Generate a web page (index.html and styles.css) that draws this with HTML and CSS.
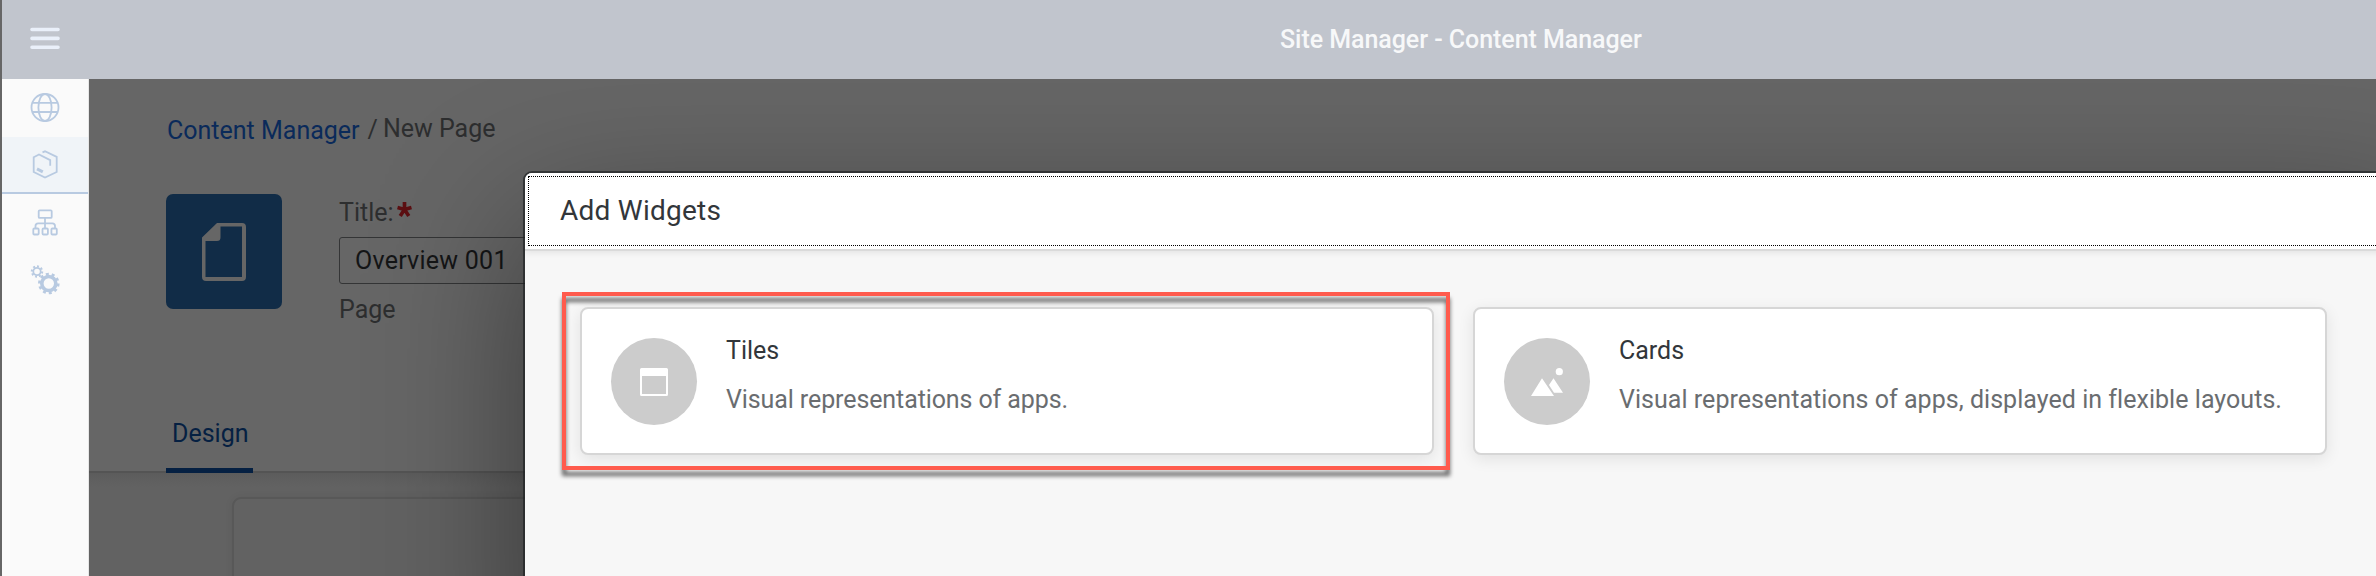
FILE: index.html
```html
<!DOCTYPE html>
<html lang="en">
<head>
<meta charset="utf-8">
<title>Site Manager - Content Manager</title>
<link rel="stylesheet" href="styles.css">
</head>
<body>
<div class="app">
  <header class="shell">
    <svg class="menu" width="30" height="24" viewBox="0 0 30 24"><path d="M2 3.500H28M2 12.400H28M2 21.300H28"/></svg>
    <h1 class="shell-title"><span>Site Manager - Content Manager</span></h1>
  </header>
  <div class="body">
    <nav class="side">
      <a class="side-item"><svg width="30" height="30" viewBox="0 0 30 30"><circle cx="15" cy="14.500" r="13.500"/><ellipse cx="15" cy="14.500" rx="6.600" ry="13.500"/><path d="M2.500 9.900H27.500M2.500 19H27.500"/></svg></a>
      <a class="side-item selected"><svg width="30" height="30" viewBox="0 0 30 30"><path d="M12.500 2.300L15 1.300L26.700 6.900V22L15 27.500L3.700 22V7.200L9 4.400L20.200 10.100V15.800"/><path class="mark" d="M7 18.900L12.800 21.900"/></svg></a>
      <a class="side-item"><svg width="30" height="30" viewBox="0 0 30 30"><rect x="8.700" y="2.300" width="13" height="7.600" rx="1"/><path d="M15 10V20.500M5.500 20.500V18Q5.500 15.300 8.200 15.300H22.300Q25 15.300 25 18V20.500"/><g class="leaf"><rect x="3.300" y="20.500" width="5.400" height="6" rx="1"/><rect x="12.500" y="20.500" width="5.400" height="6" rx="1"/><rect x="21.400" y="20.500" width="5.400" height="6" rx="1"/></g></svg></a>
      <a class="side-item"><svg width="30" height="30" viewBox="0 0 30 30"><circle cx="7" cy="6.500" r="3.700"/><circle class="teeth small" cx="7" cy="6.500" r="5.200" pathLength="80"/><circle class="big" cx="18.800" cy="18.500" r="7"/><circle class="teeth" cx="18.800" cy="18.500" r="9.300" pathLength="100"/></svg></a>
    </nav>
    <main class="page">
      <div class="crumbs"><span class="crumb-link">Content Manager</span><span class="slash">/</span><span class="crumb-current">New Page</span></div>
      <div class="summary">
        <div class="avatar"><svg width="44" height="58" viewBox="0 0 44 58"><path class="doc" fill-rule="evenodd" d="M15 0H40Q44 0 44 4V54Q44 58 40 58H4Q0 58 0 54V14.500ZM18.500 3.500V14.500Q18.500 18 15 18H3.500V54H40V3.500Z"/></svg></div>
        <div class="fields">
          <div class="label">Title:<svg class="star" width="15" height="15" viewBox="0 0 14 14"><path d="M7 0V7M0.500 5.200L7 7M13.500 5.200L7 7M3 13L7 7M11 13L7 7"/></svg></div>
          <div class="input">Overview 001</div>
          <div class="kind">Page</div>
        </div>
      </div>
      <div class="tabs"><div class="tab"><span>Design</span></div></div>
      <div class="canvas"><div class="section"></div></div>
    </main>
  </div>
  <section class="dialog">
    <div class="dialog-head"><h2>Add Widgets</h2></div>
    <div class="dialog-body">
      <div class="card">
        <div class="disc"><svg width="28" height="28" viewBox="0 0 28 28"><path fill-rule="evenodd" d="M1.500 0H26.500Q28 0 28 1.500V26.500Q28 28 26.500 28H1.500Q0 28 0 26.500V1.500Q0 0 1.500 0ZM2 8V26H26V8Z"/></svg></div>
        <div class="copy"><h3>Tiles</h3><p class="short">Visual representations of apps.</p></div>
        <div class="highlight"></div>
      </div>
      <div class="card">
        <div class="disc"><svg width="32" height="28" viewBox="0 0 32 28"><path d="M0 28L11 10.300L23 28ZM18 17L22.500 10.300L32 24.800H23Z"/><circle cx="28.300" cy="3.700" r="3.600"/></svg></div>
        <div class="copy"><h3>Cards</h3><p class="long">Visual representations of apps, displayed in flexible layouts.</p></div>
      </div>
    </div>
  </section>
</div>
</body>
</html>
```
FILE: styles.css
```css
* { box-sizing: border-box; }
body { margin: 0; overflow: hidden; }
h1, h2, h3, p { margin: 0; font-weight: 400; }
svg { display: block; }
.app {
  position: relative;
  width: 2376px;
  height: 576px;
  overflow: hidden;
  padding-left: 2px;
  background: #666;
  font: 400 25px/30px Roboto, sans-serif;
  display: flex;
  flex-direction: column;
}
.shell {
  position: relative;
  z-index: 2;
  flex: none;
  height: 79px;
  background: #c1c5cd;
  display: flex;
  align-items: center;
  padding-left: 28px;
}
.menu { fill: none; stroke: #eaf0fa; stroke-width: 3.6; stroke-linecap: round; margin-bottom: 3px; }
.shell-title { flex: 1; padding-left: 1220px; font-size: 25px; font-weight: 500; letter-spacing: -0.05px; color: #f7f8f9; white-space: nowrap; }
.body { flex: 1; min-height: 0; display: flex; }
.side {
  position: relative;
  z-index: 2;
  width: 87px;
  background: #fafafa;
  border-right: 1px solid #e6e6e6;
  display: flex;
  flex-direction: column;
}
.side-item { flex: none; height: 57px; display: flex; align-items: center; justify-content: center; }
.side-item:first-child { height: 58px; }
.side-item svg { fill: none; stroke: #b8cae1; stroke-width: 1.8; }
.side-item.selected { background: #f0f4f8; border-bottom: 2px solid #b8cae1; }
.side-item .leaf { fill: #fafafa; }
.side-item .mark { stroke-width: 3; }
.side-item .big { stroke-width: 3.6; }
.side-item .teeth { stroke-width: 3; stroke-dasharray: 5 5; }
.side-item .small { stroke-width: 2; }
.page { flex: 1; min-height: 0; display: flex; flex-direction: column; color: #2d2e2f; }
.page > * { flex: none; }
.crumbs { height: 115px; padding: 35px 0 0 78px; display: flex; }
.crumb-link { color: #0a2a5a; padding-top: 2px; }
.slash { padding: 1px 5px 0 8px; }
.summary { height: 198px; padding-left: 77px; display: flex; gap: 57px; }
.avatar { width: 116px; height: 115px; border-radius: 7px; background: #112c47; display: flex; align-items: center; justify-content: center; }
.doc { fill: #666; }
.fields { flex: 1; }
.label { height: 43px; padding-top: 4px; display: flex; gap: 3px; }
.star { margin-top: 4px; fill: none; stroke: #5c0f12; stroke-width: 3.4; }
.input { height: 47px; border: 1px solid #343536; border-radius: 3px; padding: 8px 15px; letter-spacing: 0.25px; color: #141516; }
.kind { padding-top: 11px; }
.tabs { height: 81px; border-bottom: 2px solid #545454; padding-left: 77px; }
.tab { width: 87px; height: 81px; color: #052042; padding: 27px 0 0 6px; border-radius: 3px 3px 0 0; background: linear-gradient(#052042, #052042) bottom / 100% 5px no-repeat; }
.page > .canvas { flex: 1; padding: 24px 0 0 143px; background: linear-gradient(#5c5c5c, #626262 14px); }
.section { height: 100px; border: 2px solid #585858; border-radius: 9px; background: #626262; box-shadow: 0 0 8px rgba(0,0,0,.06); }
.dialog {
  position: absolute;
  left: 525px;
  top: 173px;
  width: 1900px;
  height: 500px;
  background: #f7f7f7;
  border-radius: 7px 0 0 0;
  box-shadow: 0 0 0 2px rgba(24,26,28,.6), 0 50px 150px rgba(0,0,0,.45);
}
.dialog-head { position: relative; height: 76px; padding: 3px; background: #fff; border-radius: 7px 0 0 0; box-shadow: 0 2px 0 #dadada, 0 4px 6px rgba(0,0,0,.08); }
.dialog-head h2 { height: 70px; border: 1px dotted #000; padding: 19px 0 0 31px; font-size: 28px; line-height: 30px; letter-spacing: 0.25px; color: #32363a; }
.dialog-body { padding: 58px 0 0 55px; display: flex; gap: 39px; }
.card { position: relative; width: 854px; height: 148px; border: 2px solid #d6d6d6; border-radius: 8px; background: #fff; box-shadow: 0 4px 16px rgba(0,0,0,.09); display: flex; padding: 29px 0 0 29px; gap: 29px; color: #32363a; }
.disc { width: 86px; height: 87px; border-radius: 50%; background: #ccc; display: flex; align-items: center; justify-content: center; }
.disc svg { fill: #fff; }
.copy h3 { font-size: 25px; line-height: 30px; margin-top: -2px; }
.copy p { line-height: 30px; margin-top: 19px; color: #6a6d70; white-space: nowrap; }
.copy .short { letter-spacing: -0.1px; }
.copy .long { letter-spacing: 0.04px; }
.highlight { position: absolute; left: -20px; top: -17px; width: 888px; height: 178px; border: 4px solid #ff5b4d; filter: drop-shadow(0 6px 2px rgba(0,0,0,.6)); }
```
